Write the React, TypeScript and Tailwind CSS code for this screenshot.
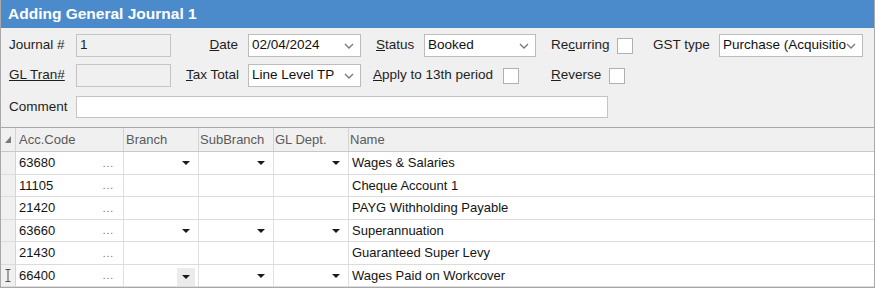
import React from 'react'

const font = "font-['Liberation_Sans',Arial,sans-serif]"

function Chevron() {
  return (
    <svg width="10" height="6" viewBox="0 0 10 6" className="shrink-0">
      <polyline points="1,1 5,5 9,1" fill="none" stroke="#7a7a7a" strokeWidth="1.4" />
    </svg>
  )
}

function Select({ value, w }: { value: string; w: string }) {
  return (
    <div className={`${w} h-full bg-white border border-[#bcbcbc] flex items-center pl-[3px] pr-[6px] overflow-hidden`}>
      <span className="flex-1 whitespace-nowrap text-[#111]">{value}</span>
      <Chevron />
    </div>
  )
}

function Check() {
  return <div className="w-4 h-4 bg-white border border-[#b0b0b0] shrink-0" />
}

function DropTri({ hot }: { hot?: boolean }) {
  return (
    <div
      className={`w-[18px] mr-[3px] flex items-center justify-center ${hot ? 'bg-[#ebebeb] self-stretch mt-[3px]' : ''}`}
    >
      <svg width="8" height="4" viewBox="0 0 8 4">
        <polygon points="0,0 8,0 4,4" fill="#1a1a1a" />
      </svg>
    </div>
  )
}

const rows = [
  { code: '63680', name: 'Wages & Salaries', drop: true, h: 'h-[23px]' },
  { code: '11105', name: 'Cheque Account 1', drop: false, h: 'h-[22px]' },
  { code: '21420', name: 'PAYG Withholding Payable', drop: false, h: 'h-[23px]' },
  { code: '63660', name: 'Superannuation', drop: true, h: 'h-[22px]' },
  { code: '21430', name: 'Guaranteed Super Levy', drop: false, h: 'h-[23px]' },
  { code: '66400', name: 'Wages Paid on Workcover', drop: true, h: 'h-[22px]', last: true },
]

const cols = 'grid grid-cols-[15px_108px_75px_75px_75px_1fr]'

export default function App() {
  return (
    <div className={`w-[875px] h-[288px] overflow-hidden bg-[#f0f0f0] border-x border-b border-[#a9a9a9] text-[13.5px] text-[#1e1e1e] ${font}`}>
      <div className="h-[28px] bg-[#4b8bcb] pl-[7px] flex items-center text-white font-bold text-[15.5px]">
        Adding General Journal 1
      </div>

      <div className="pt-[6px] pb-[9px] flex flex-col">
        <div className="h-[23px] flex items-center">
          <div className="w-[75px] pl-[8px]">Journal #</div>
          <div className="w-[95px] h-full border border-[#c4c4c4] pl-[3px] flex items-center">1</div>
          <div className="w-[77px] text-right pr-[10px]"><u>D</u>ate</div>
          <Select value="02/04/2024" w="w-[113px]" />
          <div className="w-[63px] pl-[15px]"><u>S</u>tatus</div>
          <Select value="Booked" w="w-[112px]" />
          <div className="w-[81px] pl-[15px]">Re<u>c</u>urring</div>
          <Check />
          <div className="w-[86px] pl-[20px]">GST type</div>
          <Select value="Purchase (Acquisitio" w="w-[144px]" />
        </div>

        <div className="h-[23px] mt-[7px] flex items-center">
          <div className="w-[75px] pl-[8px]"><u>GL Tran#</u></div>
          <div className="w-[95px] h-full border border-[#c4c4c4]" />
          <div className="w-[77px] text-right pr-[9px]"><u>T</u>ax Total</div>
          <Select value="Line Level TP" w="w-[113px]" />
          <div className="w-[142px] pl-[12px] whitespace-nowrap"><u>A</u>pply to 13th period</div>
          <Check />
          <div className="w-[90px] pl-[32px]"><u>R</u>everse</div>
          <Check />
        </div>

        <div className="h-[22px] mt-[9px] flex items-center">
          <div className="w-[75px] pl-[8px]">Comment</div>
          <div className="w-[532px] h-full bg-white border border-[#c4c4c4]" />
        </div>
      </div>

      <div className="border-t border-[#a8a8a8] text-[13px]">
        <div className={`${cols} h-[24px] bg-[#f0f0f0] border-b border-[#c8c8c8] text-[#5a5a5a]`}>
          <div className="border-r border-[#d4d4d4] flex items-center justify-center">
            <svg width="6" height="7" viewBox="0 0 6 7">
              <polygon points="6,0 6,7 0,7" fill="#7a7a7a" />
            </svg>
          </div>
          <div className="border-r border-[#d4d4d4] pl-[3px] flex items-center">Acc.Code</div>
          <div className="border-r border-[#d4d4d4] pl-[2px] flex items-center">Branch</div>
          <div className="border-r border-[#d4d4d4] pl-[1px] flex items-center">SubBranch</div>
          <div className="border-r border-[#d4d4d4] pl-[1px] flex items-center">GL Dept.</div>
          <div className="pl-[1px] flex items-center">Name</div>
        </div>

        {rows.map((r) => (
          <div key={r.code} className={`${cols} ${r.h} bg-white border-b border-[#dcdcdc] text-[#141414]`}>
            <div className="bg-[#f0f0f0] border-r border-[#d4d4d4] flex items-center justify-center">
              {r.last && (
                <svg width="6" height="13" viewBox="0 0 6 13">
                  <path d="M0.5 0.5h5M0.5 12.5h5M3 0.5v12" stroke="#505050" strokeWidth="1" fill="none" />
                </svg>
              )}
            </div>
            <div className="border-r border-[#e0e0e0] pl-[3px] pr-[9px] flex items-center">
              <span className="flex-1">{r.code}</span>
              <span className="text-[10px] text-[#666] tracking-[1px]">...</span>
            </div>
            <div className="border-r border-[#e0e0e0] flex justify-end items-center">
              {r.drop && <DropTri hot={r.last} />}
            </div>
            <div className="border-r border-[#e0e0e0] flex justify-end items-center">
              {r.drop && <DropTri />}
            </div>
            <div className="border-r border-[#e0e0e0] flex justify-end items-center">
              {r.drop && <DropTri />}
            </div>
            <div className="pl-[3px] flex items-center whitespace-nowrap">{r.name}</div>
          </div>
        ))}
      </div>
    </div>
  )
}
